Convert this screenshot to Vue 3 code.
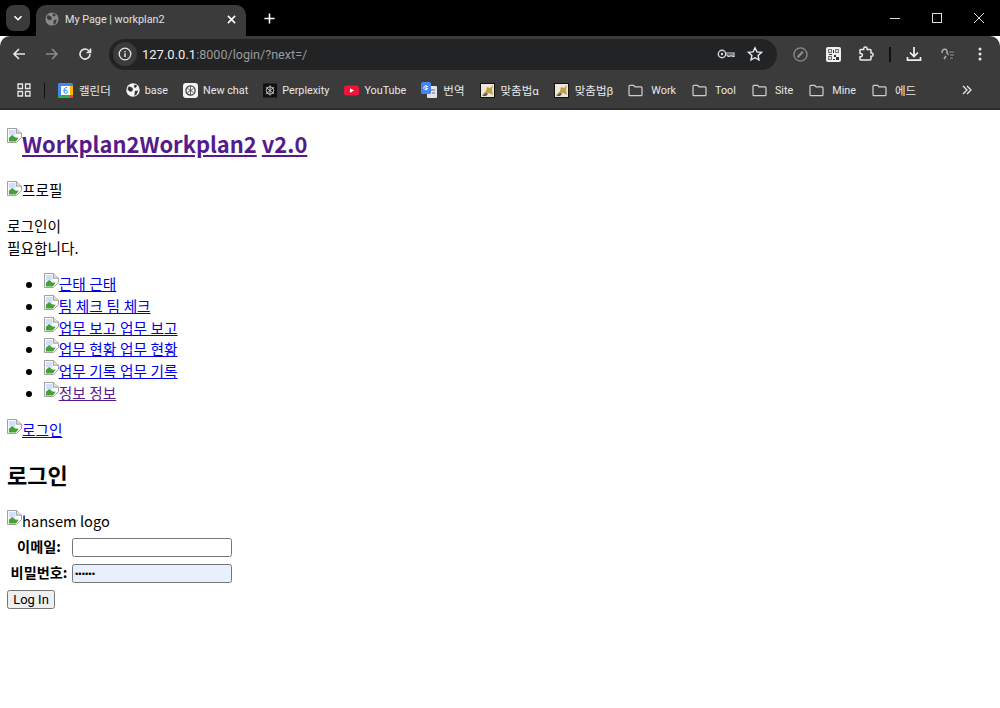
<script setup>
const bookmarks = [
  { t: '캘린더', i: 'cal', k: true }, { t: 'base', i: 'globe' }, { t: 'New chat', i: 'gpt' },
  { t: 'Perplexity', i: 'pplx' }, { t: 'YouTube', i: 'yt' }, { t: '번역', i: 'gt', k: true },
  { t: '맞춤법α', i: 'fix', k: true }, { t: '맞춤법β', i: 'fix', k: true }, { t: 'Work', i: 'folder' },
  { t: 'Tool', i: 'folder' }, { t: 'Site', i: 'folder' }, { t: 'Mine', i: 'folder' }, { t: '에드', i: 'folder', k: true }
]
const navItems = [
  { t: '근태 근태' }, { t: '팀 체크 팀 체크' }, { t: '업무 보고 업무 보고' },
  { t: '업무 현황 업무 현황' }, { t: '업무 기록 업무 기록' }, { t: '정보 정보', visited: true }
]
</script>

<template>
  <div class="chrome">
    <div class="tabstrip">
      <div class="tabsearch"><svg width="10" height="10" viewBox="0 0 10 10"><path d="M1.500 3.200 5 6.700l3.500-3.500" fill="none" stroke="#fff" stroke-width="1.600"/></svg></div>
      <div class="tab">
        <svg class="tabfav" width="14" height="14" viewBox="0 0 16 16"><circle cx="8" cy="8" r="7.500" fill="#8a8a8a"/><path d="M3 3.500 7 5l1 2.500-2 2-1.500-.5-2.500-2zM9 1.500l3.500 1.500-1.500 2-2-.5zM10 9l3.500-.5L12 13l-2.500 1.500z" fill="#3a3a3a"/></svg>
        <span class="tabtitle">My Page | workplan2</span>
        <svg class="tabclose" width="9" height="9" viewBox="0 0 10 10"><path d="m1 1 8 8m0-8-8 8" stroke="#fff" stroke-width="1.700"/></svg>
      </div>
      <svg class="newtab" width="11" height="11" viewBox="0 0 12 12"><path d="M6 .5v11M.5 6h11" stroke="#fff" stroke-width="1.700"/></svg>
      <div class="winctl">
        <svg width="10" height="10" viewBox="0 0 10 10"><path d="M0 5.500h10" stroke="#ddd"/></svg>
        <svg width="10" height="10" viewBox="0 0 10 10"><rect x=".5" y=".5" width="9" height="9" fill="none" stroke="#ddd"/></svg>
        <svg width="10" height="10" viewBox="0 0 10 10"><path d="m0 0 10 10M10 0 0 10" stroke="#ddd"/></svg>
      </div>
    </div>
    <div class="toolbar">
      <svg class="nav first" width="14" height="14" viewBox="0 0 14 14"><path d="M13 7H2M7 2 2 7l5 5" fill="none" stroke="#e8e8e8" stroke-width="1.600"/></svg>
      <svg class="nav" width="14" height="14" viewBox="0 0 14 14"><path d="M1 7h11M7 2l5 5-5 5" fill="none" stroke="#8a8a8a" stroke-width="1.600"/></svg>
      <svg class="nav" width="14" height="14" viewBox="0 0 14 14"><path d="M12 7a5 5 0 1 1-1.500-3.500L12.500 5.500M12.500 1.500v4h-4" fill="none" stroke="#e8e8e8" stroke-width="1.600"/></svg>
      <div class="omnibox">
        <div class="info"><svg width="14" height="14" viewBox="0 0 14 14"><circle cx="7" cy="7" r="5.800" fill="none" stroke="#e8e8e8" stroke-width="1.300"/><path d="M7 6.300v3.600M7 4v1.300" stroke="#e8e8e8" stroke-width="1.400"/></svg></div>
        <span class="url"><span class="host">127.0.0.1</span>:8000/login/?next=/</span>
        <svg class="key" width="18" height="12" viewBox="0 0 18 12"><circle cx="5" cy="6" r="3.700" fill="none" stroke="#d5d5d5" stroke-width="1.400"/><circle cx="5" cy="6" r="1.200" fill="#d5d5d5"/><path d="M9 5h8v3.500h-1.800V7H13v1.500h-2V7H9" fill="none" stroke="#d5d5d5" stroke-width="1.200"/></svg>
        <svg class="star" width="16" height="16" viewBox="0 0 16 16"><path d="m8 1.800 1.900 4.100 4.500.5-3.300 3 .9 4.500L8 11.700l-4 2.200.9-4.500-3.300-3 4.500-.5z" fill="none" stroke="#e8e8e8" stroke-width="1.400"/></svg>
      </div>
      <svg class="ext compass" width="15" height="15" viewBox="0 0 16 16"><circle cx="8" cy="8" r="7" fill="none" stroke="#8f8f8f" stroke-width="1.400"/><path d="m5 11 5.500-6" fill="none" stroke="#8f8f8f" stroke-width="2.400"/></svg>
      <svg class="ext qr" width="15" height="15" viewBox="0 0 15 15"><rect width="15" height="15" rx="2" fill="#efefef"/><path d="M2 2h4v4H2zM9 2h4v4H9zM2 9h4v4H2z" fill="#777"/><path d="M3 3h2v2H3zM10 3h2v2h-2zM3 10h2v2H3z" fill="#ddd"/><path d="M8 8h2v2H8zM10 10h3v3h-3zM7 12h2v1H7zM7 3h1v3H7zM3 7h3v1H3z" fill="#333"/></svg>
      <svg class="ext puzzle" width="16" height="16" viewBox="0 0 16 16"><path d="M2 4.200q0-.7.700-.7h3V2.700a1.700 1.700 0 0 1 3.400 0v.8h3q.9 0 .9.900v2.700h.5a1.600 1.600 0 0 1 0 3.200H13v2.800q0 .9-.9.900H2.700q-.7 0-.7-.7v-2.500h.7a1.700 1.700 0 0 0 0-3.400H2z" fill="none" stroke="#ececec" stroke-width="1.500"/></svg>
      <span class="sep"></span>
      <svg class="ext dl" width="16" height="16" viewBox="0 0 16 16"><path d="M8 1v9M4 6.500 8 10.500l4-4M1.500 11v3.200h13V11" fill="none" stroke="#f0f0f0" stroke-width="1.700"/></svg>
      <svg class="ext av" width="16" height="16" viewBox="0 0 16 16"><path d="M2 7c0-5 6-5 5 0l2 2M6 10l-2 3" fill="none" stroke="#ccc" stroke-width="1.500"/><path d="M8 4h6v9H9z" fill="#222" opacity=".55"/><path d="M9 6h5M10 9h4M10 12h3" fill="none" stroke="#bbb" stroke-width="1.200"/></svg>
      <svg class="ext more" width="4" height="14" viewBox="0 0 4 14"><circle cx="2" cy="2" r="1.500" fill="#e8e8e8"/><circle cx="2" cy="7" r="1.500" fill="#e8e8e8"/><circle cx="2" cy="12" r="1.500" fill="#e8e8e8"/></svg>
    </div>
    <div class="bookmarks">
      <svg class="apps" width="14" height="14" viewBox="0 0 14 14"><path d="M1 1h4.500v4.500H1zM8.500 1H13v4.500H8.500zM1 8.500h4.500V13H1zM8.500 8.500H13V13H8.500z" fill="none" stroke="#e8e8e8" stroke-width="1.300"/></svg>
      <span class="bsep"></span>
      <div v-for="b in bookmarks" :key="b.t" class="bm" :class="{ cjk: b.k, folder: b.i === 'folder' }">
        <svg v-if="b.i === 'cal'" width="15" height="15" viewBox="0 0 15 15"><rect width="15" height="15" rx="1.500" fill="#4285f4"/><rect x="3" y="3" width="9" height="9" fill="#fff"/><rect x="12" y="3" width="3" height="9" fill="#fbbc04"/><rect y="12" width="12" height="3" fill="#34a853"/><rect x="12" y="12" width="3" height="3" fill="#ea4335"/><path d="M8.800 4.500C6.800 4.500 6 6 6 8c0 1.500.7 2.300 1.700 2.300S9.300 9.500 9.300 8.600 8.600 7 7.700 7 6 7.800 6 8" fill="none" stroke="#1a73e8" stroke-width="1"/></svg>
        <svg v-else-if="b.i === 'globe'" width="14" height="14" viewBox="0 0 15 15"><circle cx="7.500" cy="7.500" r="7.200" fill="#f4f4f4"/><path d="M3 3.500 7 5l.5 2.500-2 2-1.500-.5L1.500 7zM9 1.500 12 3l-1.500 2-2-.5zM9.500 8.500l3.500-.5-1.500 4-2.500 2z" fill="#333"/></svg>
        <svg v-else-if="b.i === 'gpt'" width="15" height="15" viewBox="0 0 15 15"><rect width="15" height="15" rx="3" fill="#f4f4f4"/><circle cx="7.500" cy="7.500" r="4.600" fill="none" stroke="#444" stroke-width="1.300"/><path d="M4.500 5.500 10.500 9.500M10.500 5.500 4.500 9.500M7.500 3v9" stroke="#444" stroke-width=".8"/></svg>
        <svg v-else-if="b.i === 'pplx'" width="14" height="15" viewBox="0 0 15 15"><rect width="15" height="15" fill="#111"/><circle cx="7.500" cy="7.500" r="4" fill="none" stroke="#cfcfcf"/><path d="M7.500 2v11M3 4l9 7M12 4l-9 7" fill="none" stroke="#cfcfcf" stroke-width=".9"/></svg>
        <svg v-else-if="b.i === 'yt'" width="15" height="15" viewBox="0 0 15 15"><rect y="2.500" width="15" height="10" rx="2.500" fill="#f0143c"/><path d="m6 5.300 4 2.200-4 2.200z" fill="#fff"/></svg>
        <svg v-else-if="b.i === 'gt'" width="16" height="16" viewBox="0 0 16 16"><rect x="6" y="4" width="10" height="12" rx="1" fill="#dfe3ea"/><rect width="10" height="12" rx="1.500" fill="#4285f4"/><path d="M7 4.500H5v2h1.700a2 2 0 1 1-.6-2.300" fill="none" stroke="#fff"/><path d="M9 8h5M11 11h3" stroke="#667" stroke-width="1"/></svg>
        <svg v-else-if="b.i === 'fix'" width="15" height="15" viewBox="0 0 15 15"><rect x=".5" y=".5" width="14" height="14" fill="#eee8d8" stroke="#111"/><path d="m2 12 4-4 1-4 3 1 3-3-1 5 1 5-4-2-3 1z" fill="#c0a050"/><path d="m2 13 4-3 2 1-2 2z" fill="#555"/></svg>
        <svg v-else width="15" height="13" viewBox="0 0 16 14"><path d="M1 2.500a1 1 0 0 1 1-1h4l1.500 1.700H14a1 1 0 0 1 1 1v7.300a1 1 0 0 1-1 1H2a1 1 0 0 1-1-1z" fill="none" stroke="#cfcfcf" stroke-width="1.300"/></svg>
        <span>{{ b.t }}</span>
      </div>
      <svg class="chev" width="10" height="10" viewBox="0 0 10 10"><path d="m1 1 4 4-4 4M5 1l4 4-4 4" fill="none" stroke="#e8e8e8" stroke-width="1.300"/></svg>
    </div>
  </div>

  <div class="page">
    <h1><a href="#" class="visited"><svg class="broken head" width="15" height="15" viewBox="0 0 16 16"><use href="#broken-img"/></svg>Workplan2Workplan2</a> <a href="#" class="visited">v2.0</a></h1>
    <p class="profile"><svg class="broken low" width="15" height="15" viewBox="0 0 16 16"><use href="#broken-img"/></svg>프로필</p>
    <p class="need">로그인이<br>필요합니다.</p>
    <ul>
      <li v-for="n in navItems" :key="n.t"><a href="#" :class="{ visited: n.visited }"><svg class="broken" width="15" height="15" viewBox="0 0 16 16"><use href="#broken-img"/></svg>{{ n.t }}</a></li>
    </ul>
    <p class="loginlink"><a href="#"><svg class="broken" width="15" height="15" viewBox="0 0 16 16"><use href="#broken-img"/></svg>로그인</a></p>
    <h2>로그인</h2>
    <div class="logo"><svg class="broken" width="15" height="15" viewBox="0 0 16 16"><use href="#broken-img"/></svg>hansem logo</div>
    <form class="form" @submit.prevent>
      <div class="row"><label>이메일:</label><input type="text"></div>
      <div class="row"><label>비밀번호:</label><input class="filled" type="password" value="secret"></div>
      <button type="submit">Log In</button>
    </form>
    <svg width="0" height="0" class="defs"><defs><g id="broken-img"><path d="M.5.500h9.500l5.500 5v4.500l-5.500 5.500H.5z" fill="#fff" stroke="#989898"/><path d="M10 .5v5h5.500" fill="#e4e4e4" stroke="#989898"/><path d="M2 2h7v6H2z" fill="#cfe0f8"/><path d="M2 14.500v-4l3.500-3 3.500 2.500 3.500.5-3 4z" fill="#45a035"/></g></defs></svg>
  </div>
</template>

<style>
html, body { margin: 0; background: #fff; }
</style>

<style scoped>
.chrome { font-family: Roboto, "Noto Sans CJK KR", sans-serif; color: #e8e8e8; }
.tabstrip { height: 36px; background: #000; display: flex; align-items: flex-end; }
.tabsearch { width: 24px; height: 26px; margin: 0 0 5px 6px; background: #3a3a3a; border-radius: 8px; display: flex; align-items: center; justify-content: center; }
.tab { width: 210px; height: 31px; margin-left: 6px; background: #3b3b3b; border-radius: 10px 10px 0 0; display: flex; align-items: center; padding: 0 10px 3px 9px; box-sizing: border-box; font-size: 10.800px; }
.tabfav { flex: none; }
.tabtitle { margin-left: 6px; flex: 1; color: #e0e0e0; }
.newtab { margin: 0 0 12px 18px; }
.winctl { margin-left: auto; display: flex; gap: 32px; padding: 0 16px 13px 0; }
.toolbar { height: 36px; background: #3b3b3b; display: flex; align-items: center; border-radius: 10px 10px 0 0; }
.nav { margin-left: 19px; flex: none; }
.nav.first { margin-left: 12px; }
.omnibox { width: 668px; height: 31px; margin-left: 17px; background: #222325; border-radius: 16px; display: flex; align-items: center; font-size: 12.600px; }
.info { width: 24px; height: 24px; margin-left: 4px; border-radius: 50%; background: #3b3b3b; display: flex; align-items: center; justify-content: center; }
.url { margin-left: 5px; color: #9a9a9a; flex: 1; }
.host { color: #f0f0f0; font-size: 13px; }
.key { margin-right: 12px; }
.star { margin-right: 14px; }
.ext { flex: none; }
.compass { margin-left: 16px; }
.qr { margin-left: 18px; }
.puzzle { margin-left: 17px; }
.sep { width: 2px; height: 15px; background: #111; margin-left: 15px; }
.dl { margin-left: 15px; }
.av { margin-left: 18px; opacity: .8; }
.more { margin-left: 22px; }
.bookmarks { height: 36px; background: #3b3b3b; border-bottom: 2px solid #2c2c2c; display: flex; align-items: center; font-size: 10.800px; padding-left: 17px; }
.apps { flex: none; }
.bsep { width: 1px; height: 15px; background: #111; margin: 0 13px; }
.bm { display: flex; align-items: center; gap: 5px; margin-right: 15px; white-space: nowrap; }
.bm.cjk { gap: 6px; font-size: 11.500px; }
.bm.folder { gap: 8px; margin-right: 16px; }
.bm svg { flex: none; }
.chev { margin-left: auto; margin-right: 28px; flex: none; }

.page { padding: 0 7px; font-family: "Noto Sans CJK KR", sans-serif; font-size: 14.670px; line-height: 22px; color: #000; }
a { color: #0000ee; }
a.visited { color: #551a8b; }
.broken { vertical-align: top; }
.low { margin-top: 2px; }
.head { margin-top: 1px; }
.defs { position: absolute; }
h1 { font-size: 21.900px; line-height: 34px; margin: 17px 0 18px; font-weight: 700; }
p { margin: 15px 0; }
.profile { margin: 17px 0 14px; }
.need { margin: 14px 0; }
ul { margin: 14px 0 15px; padding-left: 36.670px; word-spacing: .4px; }
li { line-height: 21.800px; }
.loginlink { margin: 15px 0 0; }
h2 { font-size: 22px; line-height: 32px; margin: 17px 0 20px; font-weight: 700; }
.logo { height: 25px; }
.row { display: flex; align-items: center; height: 26px; }
label { width: 64px; font-weight: 700; text-align: center; margin: 0 1px 3px 0; font-size: 14.200px; line-height: 20px; }
input { width: 160px; height: 19px; box-sizing: border-box; border: 1px solid #767676; border-radius: 2.500px; padding: 0 2px; background: #fff; font-size: 9.500px; }
input.filled { background: #e8f0fe; }
button { display: block; font: 13px Roboto, sans-serif; margin-top: 3px; padding: 0; width: 48px; height: 19px; border: 1px solid #767676; border-radius: 2.500px; background: #efefef; color: #000; }
</style>
